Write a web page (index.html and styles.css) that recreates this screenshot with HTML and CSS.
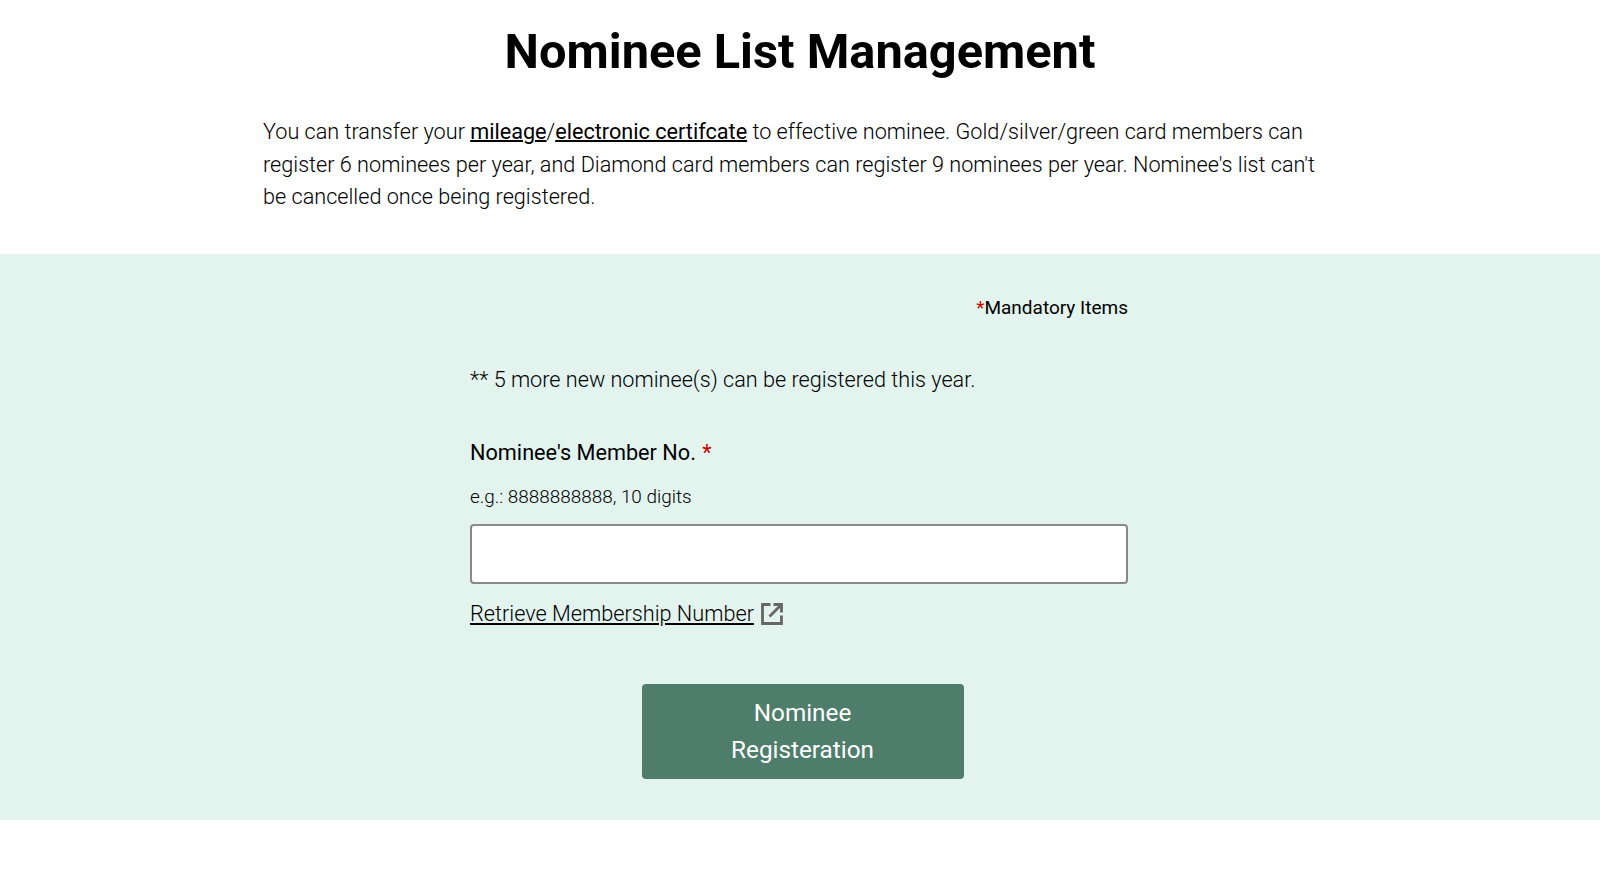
FILE: index.html
```html
<!DOCTYPE html>
<html lang="en">

<head>
    <meta charset="UTF-8">
    <meta name="viewport" content="width=device-width, initial-scale=1.0">
    <title>Nominee List Management</title>
    <link rel="stylesheet" href="styles.css">
</head>

<body>
    <div class="intro">
        <h1>Nominee List Management</h1>
        <p>You can transfer your <a href="#" class="strong-link">mileage</a>/<a href="#" class="strong-link">electronic certifcate</a> to effective nominee. Gold/silver/green card members can register 6 nominees per year, and Diamond card members can register 9 nominees per year. Nominee's list can't be cancelled once being registered.</p>
    </div>

    <div class="form-band">
        <form class="form-container">
            <div class="mandatory"><span class="required">*</span>Mandatory Items</div>
            <p class="quota">** 5 more new nominee(s) can be registered this year.</p>
            <label for="member_no">Nominee's Member No. <span class="required star">*</span></label>
            <div class="hint">e.g.: 8888888888, 10 digits</div>
            <input type="text" id="member_no" name="member_no">
            <div class="retrieve">
                <a href="#">Retrieve Membership Number</a>
                <svg class="external" viewBox="0 0 24 24" width="24" height="24" fill="none" stroke="#666" stroke-width="2.8">
                    <path d="M10.5 2.5H2.5V21.5H21.5V13.5" />
                    <path d="M9.5 14.5L21 3" />
                    <path d="M13.5 2.5H21.5V10.5" />
                </svg>
            </div>
            <div class="actions">
                <button type="submit">Nominee<br>Registeration</button>
            </div>
        </form>
    </div>
</body>

</html>
```

FILE: styles.css
```css
body {
    margin: 0;
    font-family: Roboto, "Liberation Sans", sans-serif;
    font-weight: 300;
    color: #000;
    background-color: white;
}

.intro {
    width: 1074px;
    margin: 0 auto;
    height: 254px;
}

h1 {
    margin: 0;
    padding-top: 21px;
    font-size: 48.75px;
    line-height: 62px;
    font-weight: 700;
    text-align: center;
}

.intro p {
    width: 1060px;
    margin: 33px 0 0;
    font-size: 21.65px;
    line-height: 32.6px;
}

a {
    color: #000;
}

.strong-link {
    font-weight: 400;
    text-decoration-thickness: 2px;
}

.form-band {
    height: 566px;
    background-color: #e3f4ee;
}

.form-container {
    width: 658px;
    margin: 0 auto;
    padding-top: 42px;
    position: relative;
    left: -1px;
}

.mandatory {
    text-align: right;
    font-size: 19px;
    line-height: 24px;
    font-weight: 400;
}

.required {
    color: #c00;
}

.star {
    margin-left: 1px;
}

.quota {
    margin: 44px 0 0;
    font-size: 21.65px;
    line-height: 32px;
}

label {
    display: block;
    margin-top: 41px;
    font-size: 21.7px;
    line-height: 32px;
    font-weight: 400;
}

.hint {
    margin-top: 13px;
    font-size: 18.9px;
    line-height: 30px;
}

input {
    display: block;
    width: 100%;
    height: 60px;
    margin-top: 12px;
    padding: 8px;
    border: 2px solid #888;
    border-radius: 4px;
    box-sizing: border-box;
    background-color: white;
}

.retrieve {
    display: flex;
    align-items: center;
    gap: 6px;
    margin-top: 14px;
    font-size: 21.7px;
    line-height: 32px;
}

.actions {
    display: flex;
    justify-content: center;
    margin-top: 54px;
    padding-left: 7px;
}

button {
    width: 322px;
    height: 95px;
    border: none;
    border-radius: 4px;
    background-color: #4f7d6b;
    color: white;
    font-family: inherit;
    font-size: 24.3px;
    line-height: 36.7px;
    font-weight: 400;
}
```
